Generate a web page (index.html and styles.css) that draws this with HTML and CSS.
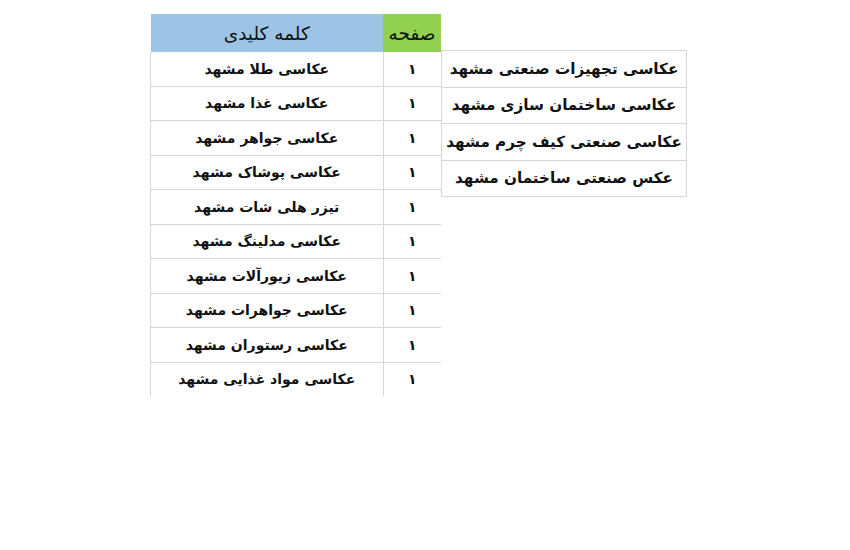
FILE: index.html
```html
<!DOCTYPE html>
<html lang="fa">
<head>
<meta charset="utf-8">
<link rel="stylesheet" href="styles.css">
</head>
<body>
<div class="page">
  <table class="kw">
    <thead>
      <tr><th class="h-page">صفحه</th><th class="h-kw">کلمه کلیدی</th></tr>
    </thead>
    <tbody>
      <tr><td class="num">۱</td><td>عکاسی طلا مشهد</td></tr>
      <tr><td class="num">۱</td><td>عکاسی غذا مشهد</td></tr>
      <tr><td class="num">۱</td><td>عکاسی جواهر مشهد</td></tr>
      <tr><td class="num">۱</td><td>عکاسی پوشاک مشهد</td></tr>
      <tr><td class="num">۱</td><td>تیزر هلی شات مشهد</td></tr>
      <tr><td class="num">۱</td><td>عکاسی مدلینگ مشهد</td></tr>
      <tr><td class="num">۱</td><td>عکاسی زیورآلات مشهد</td></tr>
      <tr><td class="num">۱</td><td>عکاسی جواهرات مشهد</td></tr>
      <tr><td class="num">۱</td><td>عکاسی رستوران مشهد</td></tr>
      <tr><td class="num">۱</td><td>عکاسی مواد غذایی مشهد</td></tr>
    </tbody>
  </table>
  <table class="side">
    <tbody>
      <tr><td>عکاسی تجهیزات صنعتی مشهد</td></tr>
      <tr><td>عکاسی ساختمان سازی مشهد</td></tr>
      <tr><td>عکاسی صنعتی کیف چرم مشهد</td></tr>
      <tr><td>عکس صنعتی ساختمان مشهد</td></tr>
    </tbody>
  </table>
</div>
</body>
</html>
```

FILE: styles.css
```css
html, body {
  margin: 0;
  padding: 0;
  background: #ffffff;
}
body {
  font-family: "DejaVu Sans", sans-serif;
  color: #111111;
}
.page {
  display: flex;
  align-items: flex-start;
  padding: 14px 0 0 150px;
}
table {
  border-collapse: collapse;
  direction: rtl;
}
.kw {
  width: 291px;
  table-layout: fixed;
}
.kw th {
  height: 38px;
  padding: 0;
  font-weight: normal;
  font-size: 18.5px;
  text-align: center;
  vertical-align: middle;
}
.h-page {
  width: 58px;
  background: #92d050;
}
.h-kw {
  background: #9dc3e6;
}
.kw td {
  height: 33.5px;
  padding: 0;
  border-top: 1px solid #d6d6d6;
  border-left: 1px solid #d6d6d6;
  text-align: center;
  vertical-align: middle;
  font-weight: bold;
  font-size: 14px;
}
.kw tbody tr:first-child td {
  border-top: none;
}
.side {
  margin-top: 36px;
  width: 246px;
}
.side td {
  height: 35.5px;
  padding: 0;
  border: 1px solid #d6d6d6;
  text-align: center;
  vertical-align: middle;
  font-weight: bold;
  font-size: 15.2px;
}
```
